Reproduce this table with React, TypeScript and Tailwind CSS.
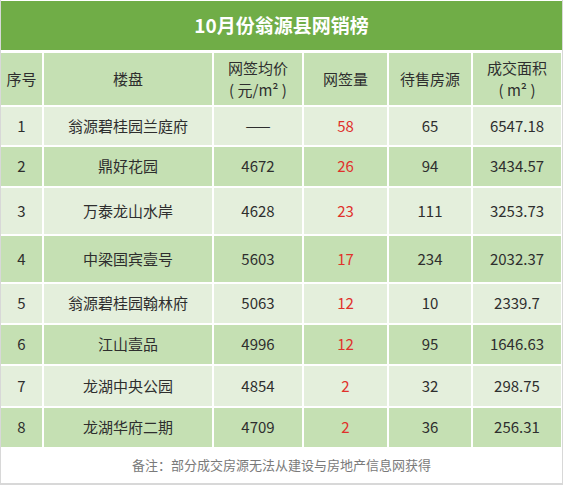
import React from "react";

const rows = [
  { n: "1", name: "翁源碧桂园兰庭府", price: "——", qty: "58", stock: "65", area: "6547.18", h: "h-[38px]" },
  { n: "2", name: "鼎好花园", price: "4672", qty: "26", stock: "94", area: "3434.57", h: "h-[39px]" },
  { n: "3", name: "万泰龙山水岸", price: "4628", qty: "23", stock: "111", area: "3253.73", h: "h-[46px]" },
  { n: "4", name: "中梁国宾壹号", price: "5603", qty: "17", stock: "234", area: "2032.37", h: "h-[46px]" },
  { n: "5", name: "翁源碧桂园翰林府", price: "5063", qty: "12", stock: "10", area: "2339.7", h: "h-[39px]" },
  { n: "6", name: "江山壹品", price: "4996", qty: "12", stock: "95", area: "1646.63", h: "h-[39px]" },
  { n: "7", name: "龙湖中央公园", price: "4854", qty: "2", stock: "32", area: "298.75", h: "h-[40px]" },
  { n: "8", name: "龙湖华府二期", price: "4709", qty: "2", stock: "36", area: "256.31", h: "h-[39px]" },
];

const font = { fontFamily: '"Noto Sans CJK SC", "Open Sans", sans-serif' };

export default function App() {
  return (
    <div
      className="w-[563px] h-[485px] bg-white relative overflow-hidden text-[#2e2e2e]"
      style={font}
    >
      <div className="absolute inset-0 border-l border-r border-b-2 border-[#d8d8d8] pointer-events-none" />
      <div className="pt-[1px] px-[1px]">
        <div className="h-[49px] bg-[#70ad47] flex items-center justify-center text-white text-[19px] font-bold">
          10月份翁源县网销榜
        </div>
        <div className="mt-[3px] grid grid-cols-[41px_168px_88px_83px_82px_88px] gap-[2px] text-[15px]">
          <div className="h-[52px] bg-[#c5e0b3] flex items-center justify-center">序号</div>
          <div className="h-[52px] bg-[#c5e0b3] flex items-center justify-center">楼盘</div>
          <div className="h-[52px] bg-[#c5e0b3] flex flex-col items-center justify-center leading-[22px]">
            <span>网签均价</span>
            <span>(&nbsp;元/m²&nbsp;)</span>
          </div>
          <div className="h-[52px] bg-[#c5e0b3] flex items-center justify-center">网签量</div>
          <div className="h-[52px] bg-[#c5e0b3] flex items-center justify-center">待售房源</div>
          <div className="h-[52px] bg-[#c5e0b3] flex flex-col items-center justify-center leading-[22px]">
            <span>成交面积</span>
            <span>(&nbsp;m²&nbsp;)</span>
          </div>
          {rows.map((r, i) => {
            const bg = i % 2 === 0 ? "bg-[#e4efdc]" : "bg-[#c5e0b3]";
            const cell = `${r.h} ${bg} flex items-center justify-center`;
            return (
              <React.Fragment key={r.n}>
                <div className={cell}>{r.n}</div>
                <div className={cell}>{r.name}</div>
                <div className={cell}>{r.price}</div>
                <div className={`${cell} text-[#e0312b]`}>{r.qty}</div>
                <div className={cell}>{r.stock}</div>
                <div className={cell}>{r.area}</div>
              </React.Fragment>
            );
          })}
        </div>
        <div className="h-[35px] flex items-center justify-center text-[13px] text-[#7a7a7a]">
          备注：部分成交房源无法从建设与房地产信息网获得
        </div>
      </div>
    </div>
  );
}
